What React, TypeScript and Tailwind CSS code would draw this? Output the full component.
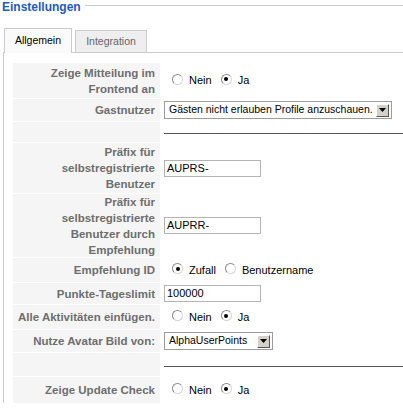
import React from "react";

type Row = {
  label?: string;
  h: string;
  field: React.ReactNode;
};

const Radio = ({ checked }: { checked?: boolean }) => (
  <span className="mb-[3px] ml-[8px] flex h-[11px] w-[11px] shrink-0 items-center justify-center rounded-full border border-[#8a8a8a] border-r-[#d6d6d6] border-b-[#d6d6d6] bg-white">
    {checked && <span className="h-[4px] w-[4px] rounded-full bg-black" />}
  </span>
);

const RadioGroup = ({
  options,
  value,
}: {
  options: string[];
  value: string;
}) => (
  <div className="flex items-center">
    {options.map((o) => (
      <label key={o} className="flex items-center">
        <Radio checked={o === value} />
        <span className="ml-[6px] mr-[1px] text-black">{o}</span>
      </label>
    ))}
  </div>
);

const Select = ({ value, w }: { value: string; w: string }) => (
  <div
    className={`flex h-[18px] ${w} items-center justify-between border border-[#9c9c9c] bg-white pl-[4px] pr-[2px]`}
  >
    <span className="whitespace-nowrap text-[10.5px] text-black">{value}</span>
    <span className="flex h-[13px] w-[13px] shrink-0 items-center justify-center border border-white border-r-[#555] border-b-[#555] bg-[#d4d0c8]">
      <svg width="7" height="4" viewBox="0 0 7 4">
        <path d="M0 0h7L3.5 4z" fill="#000" />
      </svg>
    </span>
  </div>
);

const TextInput = ({ value }: { value: string }) => (
  <div className="flex h-[17px] w-[97px] items-center border border-[#b4b4b4] bg-white pl-[2px] text-black">
    {value}
  </div>
);

const Rule = () => <div className="mt-[3px] h-px w-full bg-[#555]" />;

const rows: Row[] = [
  {
    label: "Zeige Mitteilung im Frontend an",
    h: "h-[35px]",
    field: <RadioGroup options={["Nein", "Ja"]} value="Ja" />,
  },
  {
    label: "Gastnutzer",
    h: "h-[22px]",
    field: (
      <Select value="Gästen nicht erlauben Profile anzuschauen." w="w-[228px]" />
    ),
  },
  { h: "h-[20px]", field: <Rule /> },
  {
    label: "Präfix für selbstregistrierte Benutzer",
    h: "h-[50px]",
    field: <TextInput value="AUPRS-" />,
  },
  {
    label: "Präfix für selbstregistrierte Benutzer durch Empfehlung",
    h: "h-[63px]",
    field: <TextInput value="AUPRR-" />,
  },
  {
    label: "Empfehlung ID",
    h: "h-[24px]",
    field: <RadioGroup options={["Zufall", "Benutzername"]} value="Zufall" />,
  },
  {
    label: "Punkte-Tageslimit",
    h: "h-[21px]",
    field: <TextInput value="100000" />,
  },
  {
    label: "Alle Aktivitäten einfügen.",
    h: "h-[24px]",
    field: <RadioGroup options={["Nein", "Ja"]} value="Ja" />,
  },
  {
    label: "Nutze Avatar Bild von:",
    h: "h-[22px]",
    field: <Select value="AlphaUserPoints" w="w-[109px]" />,
  },
  { h: "h-[23px]", field: <Rule /> },
  {
    label: "Zeige Update Check",
    h: "h-[26px]",
    field: <RadioGroup options={["Nein", "Ja"]} value="Ja" />,
  },
];

export default function App() {
  return (
    <div className="h-[411px] w-[403px] overflow-hidden bg-white font-['Liberation_Sans',Arial,sans-serif] text-[11px]">
      {/* legend */}
      <div className="flex items-start pl-[2px]">
        <span className="text-[12px] font-bold leading-[14px] text-[#1c5bc3]">
          Einstellungen
        </span>
        <span className="ml-[4px] mt-[5px] h-px flex-1 bg-[#cccccc]" />
      </div>

      {/* tabs */}
      <div className="mt-[14px] flex items-end pl-[4px]">
        <div className="z-10 -mb-px flex h-[25px] w-[68px] items-center justify-center border border-b-0 border-[#cccccc] bg-[#fafafa] text-[10.5px] text-black">
          Allgemein
        </div>
        <div className="ml-[3px] flex h-[22px] w-[72px] items-center justify-center border border-b-0 border-[#cccccc] bg-[#eeeeee] text-[10.5px] text-[#666]">
          Integration
        </div>
      </div>

      <div className="ml-[3px] border-l border-t border-[#cccccc] pl-[9px] pt-[10px]">
        <div className="flex flex-col gap-px">
          {rows.map((r, i) => (
            <div key={i} className={`flex ${r.h} gap-[2px]`}>
              <div className="flex w-[147px] shrink-0 items-center justify-end bg-[#f5f5f5] pl-[4px] pr-[5px] text-right text-[11.5px] font-bold leading-[16px] text-[#6e6e6e]">
                {r.label}
              </div>
              <div className="flex flex-1 items-center pl-[2px]">{r.field}</div>
            </div>
          ))}
        </div>
      </div>
    </div>
  );
}
